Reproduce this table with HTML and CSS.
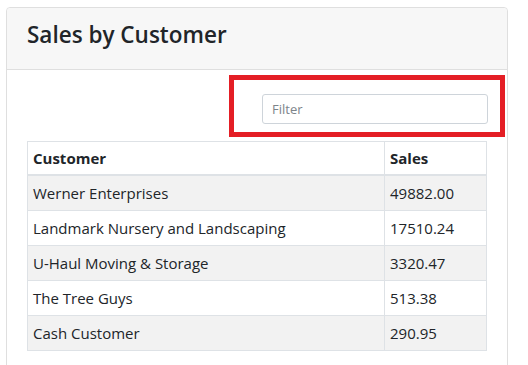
FILE: index.html
```html
<!DOCTYPE html>
<html lang="en">
<head>
    <meta charset="UTF-8">
    <title>Sales by Customer</title>
    <link rel="stylesheet" href="styles.css">
</head>
<body>
<div class="card">
    <div class="card-header">
        <h4 class="title">Sales by Customer</h4>
    </div>
    <div class="card-body">
        <div class="filter-bar">
            <div class="highlight">
                <input class="filter" placeholder="Filter">
            </div>
        </div>
        <table class="sales">
            <thead>
            <tr>
                <th>Customer</th>
                <th class="amount">Sales</th>
            </tr>
            </thead>
            <tbody>
            <tr><td>Werner Enterprises</td><td>49882.00</td></tr>
            <tr><td>Landmark Nursery and Landscaping</td><td>17510.24</td></tr>
            <tr><td>U-Haul Moving &amp; Storage</td><td>3320.47</td></tr>
            <tr><td>The Tree Guys</td><td>513.38</td></tr>
            <tr><td>Cash Customer</td><td>290.95</td></tr>
            </tbody>
        </table>
    </div>
</div>
</body>
</html>
```

FILE: styles.css
```css
body {
    margin: 0;
    padding: 7px 6px;
    font-family: "Open Sans", "Noto Sans", sans-serif;
    font-size: 15px;
    color: #212529;
    background: #fff;
}

.card {
    width: 500px;
    border: 1px solid #dfdfdf;
    border-radius: 4px;
    min-height: 400px;
}

.card-header {
    background-color: #f7f7f7;
    border-bottom: 1px solid #dfdfdf;
    padding: 12px 20px 20px;
    border-radius: 4px 4px 0 0;
}

.title {
    margin: 0;
    font-size: 22.5px;
    font-weight: 600;
    line-height: 29px;
}

.card-body {
    padding: 5px 20px 20px;
}

.filter-bar {
    display: flex;
    justify-content: flex-end;
    margin-right: -18px;
}

.highlight {
    border: 5px solid #e41e25;
    padding: 14px 12px 8px 28px;
}

.filter {
    display: block;
    width: 226px;
    height: 30px;
    box-sizing: border-box;
    border: 1px solid #ced4da;
    border-radius: 3px;
    padding: 4px 9px;
    font-family: inherit;
    font-size: 13px;
    color: #495057;
}

.filter::placeholder {
    color: #7d848a;
}

.sales {
    width: 460px;
    margin-top: 4px;
    border-collapse: collapse;
}

.sales th,
.sales td {
    border: 1px solid #dee2e6;
    padding: 5px;
    line-height: 24px;
    text-align: left;
}

.sales th {
    padding: 4px 5px;
    border-bottom-width: 2px;
    font-weight: 700;
}

.sales .amount {
    width: 91px;
}

.sales tbody tr:nth-child(odd) {
    background-color: #f2f2f2;
}
```
